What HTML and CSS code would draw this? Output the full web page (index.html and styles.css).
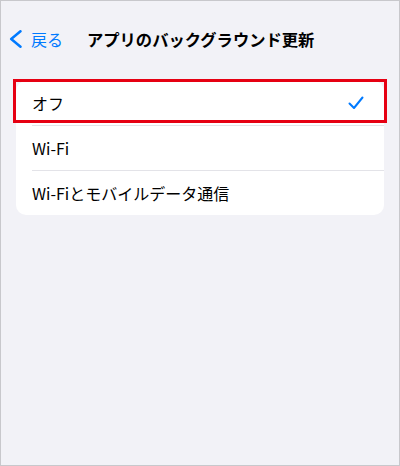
FILE: index.html
```html
<!DOCTYPE html>
<html lang="ja">
<head>
  <meta charset="UTF-8">
  <meta name="viewport" content="width=device-width, initial-scale=1.0">
  <title>アプリのバックグラウンド更新</title>
  <link rel="stylesheet" href="styles.css">
</head>
<body>

  <div class="screen">
    <div class="nav">
      <a class="back" href="#">
        <svg class="chevron" width="14" height="18" viewBox="0 0 14 18">
          <path d="M11.5 1.3 L2.2 9 L11.5 16.7" fill="none" stroke="#007aff" stroke-width="2.5" stroke-linecap="round" stroke-linejoin="round"/>
        </svg>
        <span>戻る</span>
      </a>
      <div class="title">アプリのバックグラウンド更新</div>
    </div>

    <div class="list">
      <div class="row selected">
        <span>オフ</span>
        <svg class="check" width="16" height="14" viewBox="0 0 16 14">
          <path d="M1.5 7.5 L6 12 L14.5 1.5" fill="none" stroke="#007aff" stroke-width="2" stroke-linecap="round" stroke-linejoin="round"/>
        </svg>
        <div class="highlight"></div>
      </div>
      <div class="row"><span>Wi-Fi</span></div>
      <div class="row"><span>Wi-Fiとモバイルデータ通信</span></div>
    </div>
  </div>

</body>
</html>
```

FILE: styles.css
```css
body {
  margin: 0;
  font-family: 'Noto Sans CJK JP', 'Noto Sans', sans-serif;
  background-color: #fff;
}

.screen {
  box-sizing: border-box;
  width: 400px;
  height: 466px;
  border: 1px solid #c8c8cc;
  background-color: #f2f2f7;
  padding: 0 15px;
}

.nav {
  height: 80px;
  box-sizing: border-box;
  padding-bottom: 4px;
  display: flex;
  align-items: center;
}

.back {
  display: flex;
  align-items: center;
  gap: 8px;
  margin-left: -7px;
  color: #007aff;
  text-decoration: none;
  font-size: 16px;
}

.title {
  margin-left: 24px;
  font-size: 16.3px;
  font-weight: bold;
  color: #000;
}

.list {
  background-color: #fff;
  border-radius: 10px;
}

.row {
  position: relative;
  height: 44px;
  margin-left: 16px;
  padding-right: 20px;
  display: flex;
  align-items: center;
  justify-content: space-between;
  font-size: 16px;
  color: #000;
  border-top: 1px solid #e3e3e8;
}

.row:first-child {
  border-top: none;
}

.check {
  display: block;
}

.highlight {
  position: absolute;
  left: -19px;
  right: -3px;
  top: -2px;
  bottom: 2px;
  border: 3px solid #e60012;
  pointer-events: none;
}
```
